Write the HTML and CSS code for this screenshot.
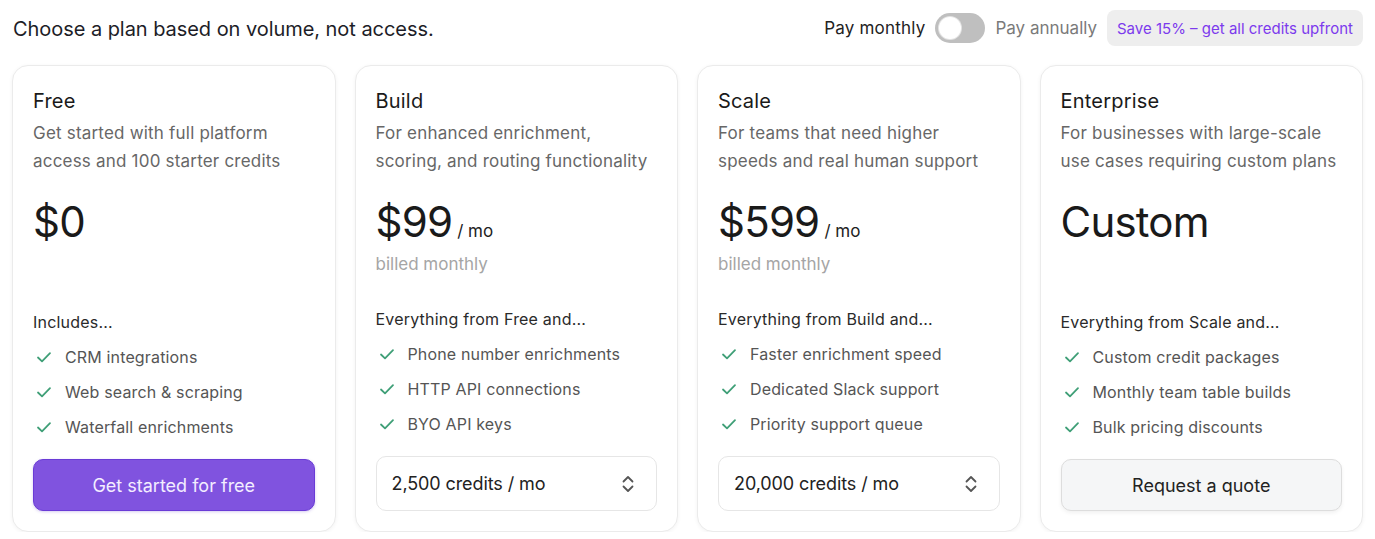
FILE: index.html
```html
<!DOCTYPE html>
<html lang="en">
<head>
<meta charset="utf-8">
<title>Pricing</title>
<link rel="stylesheet" href="styles.css">
</head>
<body>
<div class="page">
  <header class="top">
    <h1 class="headline">Choose a plan based on volume, not access.</h1>
    <div class="billing">
      <span class="pay-label">Pay monthly</span>
      <span class="toggle"><span class="knob"></span></span>
      <span class="pay-label muted">Pay annually</span>
      <span class="badge">Save 15% – get all credits upfront</span>
    </div>
  </header>

  <div class="plans">
    <section class="card">
      <h2 class="plan-name">Free</h2>
      <p class="plan-desc">Get started with full platform access and 100 starter credits</p>
      <div class="price-block">
        <div class="price"><span class="amount">$0</span></div>
      </div>
      <div class="features">
        <div class="feat-label">Includes...</div>
        <ul class="feat-list">
          <li><svg class="check" viewBox="0 0 16 16"><path d="M2 8.5l4 3.8L14 4.2"/></svg>CRM integrations</li>
          <li><svg class="check" viewBox="0 0 16 16"><path d="M2 8.5l4 3.8L14 4.2"/></svg>Web search &amp; scraping</li>
          <li><svg class="check" viewBox="0 0 16 16"><path d="M2 8.5l4 3.8L14 4.2"/></svg>Waterfall enrichments</li>
        </ul>
      </div>
      <button class="btn btn-primary">Get started for free</button>
    </section>

    <section class="card">
      <h2 class="plan-name">Build</h2>
      <p class="plan-desc">For enhanced enrichment, scoring, and routing functionality</p>
      <div class="price-block">
        <div class="price"><span class="amount">$99</span><span class="per">/ mo</span></div>
        <div class="billed">billed monthly</div>
      </div>
      <div class="features">
        <div class="feat-label">Everything from Free and...</div>
        <ul class="feat-list">
          <li><svg class="check" viewBox="0 0 16 16"><path d="M2 8.5l4 3.8L14 4.2"/></svg>Phone number enrichments</li>
          <li><svg class="check" viewBox="0 0 16 16"><path d="M2 8.5l4 3.8L14 4.2"/></svg>HTTP API connections</li>
          <li><svg class="check" viewBox="0 0 16 16"><path d="M2 8.5l4 3.8L14 4.2"/></svg>BYO API keys</li>
        </ul>
      </div>
      <div class="select">
        <span>2,500 credits / mo</span>
        <svg class="chev" viewBox="0 0 16 20"><path d="M3.5 7.5L8 3l4.5 4.5M3.5 12.5L8 17l4.5-4.5"/></svg>
      </div>
    </section>

    <section class="card">
      <h2 class="plan-name">Scale</h2>
      <p class="plan-desc">For teams that need higher speeds and real human support</p>
      <div class="price-block">
        <div class="price"><span class="amount">$599</span><span class="per">/ mo</span></div>
        <div class="billed">billed monthly</div>
      </div>
      <div class="features">
        <div class="feat-label">Everything from Build and...</div>
        <ul class="feat-list">
          <li><svg class="check" viewBox="0 0 16 16"><path d="M2 8.5l4 3.8L14 4.2"/></svg>Faster enrichment speed</li>
          <li><svg class="check" viewBox="0 0 16 16"><path d="M2 8.5l4 3.8L14 4.2"/></svg>Dedicated Slack support</li>
          <li><svg class="check" viewBox="0 0 16 16"><path d="M2 8.5l4 3.8L14 4.2"/></svg>Priority support queue</li>
        </ul>
      </div>
      <div class="select">
        <span>20,000 credits / mo</span>
        <svg class="chev" viewBox="0 0 16 20"><path d="M3.5 7.5L8 3l4.5 4.5M3.5 12.5L8 17l4.5-4.5"/></svg>
      </div>
    </section>

    <section class="card">
      <h2 class="plan-name">Enterprise</h2>
      <p class="plan-desc">For businesses with large-scale use cases requiring custom plans</p>
      <div class="price-block">
        <div class="price"><span class="amount">Custom</span></div>
      </div>
      <div class="features">
        <div class="feat-label">Everything from Scale and...</div>
        <ul class="feat-list">
          <li><svg class="check" viewBox="0 0 16 16"><path d="M2 8.5l4 3.8L14 4.2"/></svg>Custom credit packages</li>
          <li><svg class="check" viewBox="0 0 16 16"><path d="M2 8.5l4 3.8L14 4.2"/></svg>Monthly team table builds</li>
          <li><svg class="check" viewBox="0 0 16 16"><path d="M2 8.5l4 3.8L14 4.2"/></svg>Bulk pricing discounts</li>
        </ul>
      </div>
      <button class="btn btn-secondary">Request a quote</button>
    </section>
  </div>
</div>
</body>
</html>
```

FILE: styles.css
```css
* { box-sizing: border-box; }
html, body { margin: 0; padding: 0; background: #ffffff; }
body {
  font-family: "Inter", "Noto Sans", sans-serif;
  color: #1c1c1c;
}
.page { padding: 10px 12px 0 12px; }

.top {
  display: flex;
  align-items: center;
  justify-content: space-between;
  height: 36px;
}
.headline {
  margin: 2px 0 0 1px;
  font-size: 20px;
  font-weight: 400;
  color: #1d1d27;
  letter-spacing: -0.05px;
}
.billing { display: flex; align-items: center; }
.pay-label { font-size: 17px; color: #222; letter-spacing: 0.2px; }
.pay-label.muted { color: #7a7a7a; letter-spacing: 0; }
.toggle {
  width: 50px; height: 30px; border-radius: 15px;
  background: #bfbfbf;
  margin: 0 10px;
  display: flex; align-items: center; padding-left: 4px;
}
.knob {
  width: 22px; height: 22px; border-radius: 50%;
  background: #fff;
  box-shadow: 0 0 0 1px #e4e4e4;
}
.badge {
  margin-left: 10px;
  height: 36px;
  display: flex; align-items: center;
  padding: 0 10px;
  background: #eeeeee;
  border-radius: 8px;
  color: #7c3aed;
  font-size: 15px;
  letter-spacing: 0;
}

.plans {
  margin-top: 19px;
  display: grid;
  grid-template-columns: repeat(4, 1fr);
  gap: 19px;
}
.card {
  border: 1px solid #ebebeb;
  border-radius: 16px;
  padding: 21px 20px 20px 20px;
  height: 467px;
  display: flex;
  flex-direction: column;
  box-shadow: 0 1px 4px rgba(0,0,0,0.05);
  background: #fff;
}
.plan-name {
  margin: 0;
  font-size: 20px;
  font-weight: 400;
  line-height: 28px;
  color: #1a1a1a;
  letter-spacing: 0.2px;
}
.plan-desc {
  margin: 4px 0 0 0;
  font-size: 17px;
  line-height: 28px;
  color: #676767;
  letter-spacing: 0.2px;
}
.price-block { margin-top: 25px; }
.price { display: flex; align-items: baseline; height: 44px; line-height: 44px; }
.amount { font-size: 42px; font-weight: 400; color: #1a1a1a; letter-spacing: -0.8px; }
.per { font-size: 17px; margin-left: 5px; color: #222; }
.billed { font-size: 17px; line-height: 28px; color: #a5a5a5; margin-top: 6px; letter-spacing: 0; }

.features { margin-top: auto; }
.feat-label { font-size: 16px; line-height: 34px; color: #2a2a2a; letter-spacing: 0.2px; }
.feat-list { list-style: none; margin: 0; padding: 0; }
.feat-list li {
  display: flex; align-items: center;
  height: 35px;
  font-size: 16px;
  color: #555;
  letter-spacing: 0.15px;
}
.check {
  width: 16px; height: 16px;
  margin: 0 13px 0 3px;
  fill: none; stroke: #3f9f77; stroke-width: 1.8;
  stroke-linecap: round; stroke-linejoin: round;
}

.btn {
  margin-top: 15px;
  height: 52px;
  width: 100%;
  border-radius: 10px;
  font-family: inherit;
  font-size: 18px;
  cursor: pointer;
}
.btn-primary {
  background: #8053df;
  border: 1px solid #6a3bd6;
  color: #f3edff;
  box-shadow: 0 1px 3px rgba(90,50,200,0.25);
}
.btn-secondary {
  background: #f5f6f7;
  border: 1px solid #dddddd;
  color: #222;
  box-shadow: 0 2px 4px rgba(0,0,0,0.06);
}
.select {
  margin-top: 15px;
  height: 55px;
  border: 1px solid #e6e6e6;
  border-radius: 10px;
  display: flex; align-items: center; justify-content: space-between;
  padding: 0 20px 0 15px;
  font-size: 18px;
  color: #222;
  letter-spacing: -0.1px;
}
.chev {
  width: 16px; height: 20px;
  fill: none; stroke: #555; stroke-width: 1.8;
  stroke-linecap: round; stroke-linejoin: round;
}
```
